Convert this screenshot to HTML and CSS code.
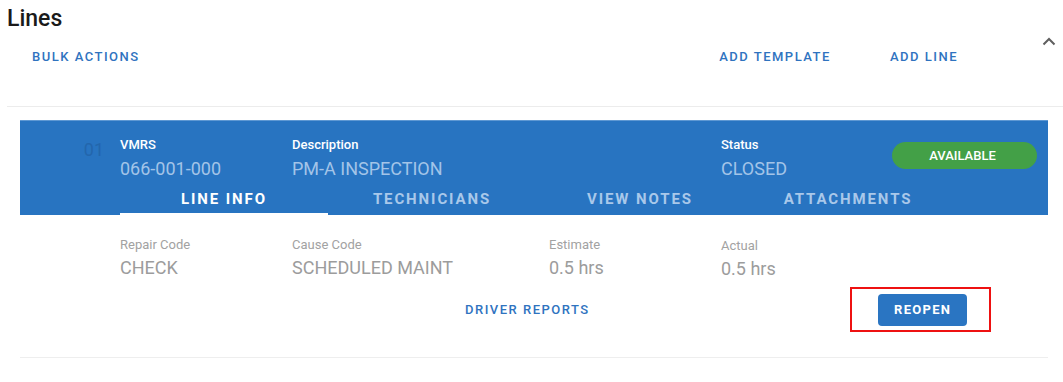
FILE: index.html
```html
<!DOCTYPE html>
<html>
<head>
<meta charset="utf-8">
<link rel="stylesheet" href="styles.css">
</head>
<body>
<div class="page">
  <h1 class="title">Lines</h1>
  <div class="actions">
    <a class="link bulk">BULK ACTIONS</a>
    <div class="right-actions">
      <a class="link">ADD TEMPLATE</a>
      <a class="link">ADD LINE</a>
    </div>
    <svg class="chevron" width="14" height="9" viewBox="0 0 14 9"><path d="M1.5 7.5 L7 2 L12.5 7.5" fill="none" stroke="#5f5f5f" stroke-width="2"/></svg>
  </div>
  <div class="divider"></div>

  <div class="line">
    <div class="line-head">
      <div class="grid">
        <div class="num">01</div>
        <div class="field">
          <div class="hlabel">VMRS</div>
          <div class="hvalue">066-001-000</div>
        </div>
        <div class="field">
          <div class="hlabel">Description</div>
          <div class="hvalue">PM-A INSPECTION</div>
        </div>
        <div></div>
        <div class="field">
          <div class="hlabel">Status</div>
          <div class="hvalue">CLOSED</div>
        </div>
        <div class="pill">AVAILABLE</div>
      </div>
      <div class="tabs">
        <div class="tab active">LINE INFO</div>
        <div class="tab">TECHNICIANS</div>
        <div class="tab">VIEW NOTES</div>
        <div class="tab">ATTACHMENTS</div>
      </div>
    </div>
    <div class="line-body">
      <div class="grid body-grid">
        <div></div>
        <div class="field">
          <div class="blabel">Repair Code</div>
          <div class="bvalue">CHECK</div>
        </div>
        <div class="field">
          <div class="blabel">Cause Code</div>
          <div class="bvalue">SCHEDULED MAINT</div>
        </div>
        <div class="field">
          <div class="blabel">Estimate</div>
          <div class="bvalue">0.5 hrs</div>
        </div>
        <div class="field actual">
          <div class="blabel">Actual</div>
          <div class="bvalue">0.5 hrs</div>
        </div>
      </div>
      <div class="footer-row">
        <a class="link">DRIVER REPORTS</a>
        <div class="highlight"><button class="reopen">REOPEN</button></div>
      </div>
    </div>
  </div>
</div>
</body>
</html>
```

FILE: styles.css
```css
* { box-sizing: border-box; }
html, body { margin: 0; padding: 0; background: #fff; }
body { font-family: Roboto, "Liberation Sans", Arial, sans-serif; width: 1063px; overflow: hidden; }

.page { padding-left: 7px; }
.title {
  margin: 0;
  padding-top: 6px;
  font-size: 23px;
  line-height: 25px;
  font-weight: 500;
  color: #1a1a1a;
}

.actions {
  display: flex;
  align-items: center;
  height: 52px;
  position: relative;
}
.link {
  font-size: 13px;
  font-weight: 500;
  letter-spacing: 1.5px;
  color: #2f73bf;
  line-height: 16px;
}
.bulk { margin-left: 25px; }
.right-actions { margin-left: auto; margin-right: 105px; display: flex; gap: 59px; }
.chevron { position: absolute; right: 7px; top: 6px; }

.divider { height: 1px; background: #ececec; margin-top: 23px; }

.line {
  margin: 13px 15px 0 13px;
  border-bottom: 1px solid #eeeeee;
}
.line-head {
  background: #2874c1;
  border-top: 1px solid #5e98d3;
  padding-top: 16px;
}
.grid {
  display: grid;
  grid-template-columns: 100px 172px 257px 172px 171px 145px;
  align-items: start;
}
.num {
  text-align: right;
  padding-right: 16px;
  padding-top: 2px;
  font-size: 18px;
  color: #2366ac;
}
.hlabel { font-size: 13px; line-height: 16px; color: #fff; font-weight: 500; }
.hvalue { font-size: 18px; line-height: 21px; margin-top: 5px; color: #a3c4e8; }
.pill {
  margin-top: 5px;
  height: 27px;
  border-radius: 14px;
  background: #43a047;
  color: #fff;
  font-size: 13px;
  font-weight: 500;
  text-align: center;
  line-height: 27px;
  padding-right: 4px;
}

.tabs {
  display: flex;
  margin-left: 100px;
  margin-top: 4px;
}
.tab {
  width: 208px;
  text-align: center;
  font-size: 15px;
  font-weight: 700;
  letter-spacing: 1.9px;
  color: #a9c8ea;
  line-height: 18px;
  padding: 7px 0 5px;
  border-bottom: 2px solid transparent;
}
.tab.active { color: #fff; border-bottom-color: #fff; }

.line-body { padding-top: 22px; padding-bottom: 25px; }
.blabel { font-size: 13px; line-height: 16px; color: #a2a2a2; }
.bvalue { font-size: 18px; line-height: 21px; margin-top: 4px; color: #9c9c9c; }
.actual { padding-top: 1px; }

.footer-row {
  display: flex;
  align-items: center;
  margin-top: 8px;
  padding-left: 445px;
}
.highlight {
  margin-left: 260px;
  border: 2px solid #ee1111;
  width: 141px;
  height: 45px;
  display: flex;
  align-items: center;
  justify-content: center;
  padding-left: 5px;
}
.reopen {
  width: 89px;
  height: 32px;
  background: #2a75c2;
  color: #fff;
  border: none;
  border-radius: 4px;
  font-family: Roboto, "Liberation Sans", Arial, sans-serif;
  font-size: 13px;
  font-weight: 700;
  letter-spacing: 1.3px;
}
```
